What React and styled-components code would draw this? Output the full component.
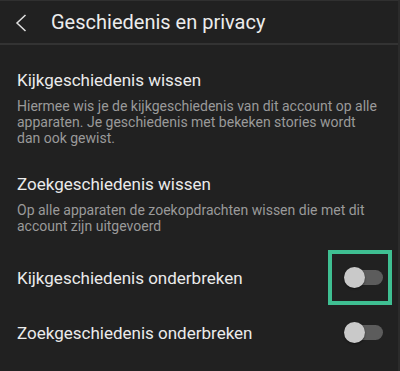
import React from "react";
import styled, { createGlobalStyle } from "styled-components";

const Global = createGlobalStyle`
  html, body { margin: 0; padding: 0; background: #212121; }
  body { font-family: Roboto, "Noto Sans", sans-serif; }
`;

const Screen = styled.div`
  width: 400px;
  height: 371px;
  box-sizing: border-box;
  background: #212121;
  border-top: 1px solid #303030;
  border-right: 2px solid #2b2b2b;
  overflow: hidden;
  display: flex;
  flex-direction: column;
`;

const Header = styled.header`
  height: 42px;
  flex: none;
  display: flex;
  align-items: center;
  border-bottom: 2px solid #333333;
  padding-left: 15px;
  gap: 24px;
`;

const BackIcon = styled.svg`
  width: 12px;
  height: 18px;
  flex: none;
  margin-top: 1px;
`;

const Title = styled.h1`
  margin: 0;
  font-size: 20px;
  font-weight: 400;
  color: #ececec;
  letter-spacing: 0;
`;

const Content = styled.div`
  display: flex;
  flex-direction: column;
  padding: 25px 0 0 17px;
`;

const Section = styled.section`
  display: flex;
  flex-direction: column;
  gap: 8px;
  margin-bottom: ${(p) => p.$mb}px;
`;

const ItemTitle = styled.div`
  font-size: 17px;
  line-height: 20px;
  color: #ebebeb;
`;

const ItemDesc = styled.div`
  font-size: 14px;
  line-height: 16px;
  color: #9a9a9a;
  padding-right: 20px;
`;

const Row = styled.div`
  height: 55px;
  display: flex;
  align-items: center;
  justify-content: space-between;
  padding-right: 6px;
`;

const Highlight = styled.div`
  width: 64px;
  height: 55px;
  display: flex;
  align-items: center;
  justify-content: flex-end;
  padding-right: 9px;
  box-sizing: border-box;
  ${(p) => (p.$on ? "outline: 4px solid #3fbf92; outline-offset: -4px;" : "")}
`;

const Track = styled.div`
  position: relative;
  width: 38px;
  height: 15px;
  border-radius: 8px;
  background: #5c5c5c;
`;

const Thumb = styled.div`
  position: absolute;
  left: -1px;
  top: -3px;
  width: 21px;
  height: 21px;
  border-radius: 50%;
  background: #c9c9c9;
  box-shadow: 0 1px 2px rgba(0, 0, 0, 0.5);
`;

function Toggle() {
  return (
    <Track>
      <Thumb />
    </Track>
  );
}

export default function App() {
  return (
    <>
      <Global />
      <Screen>
        <Header>
          <BackIcon viewBox="0 0 12 18">
            <path d="M10.5 1 L2 9 L10.5 17" fill="none" stroke="#e0e0e0" strokeWidth="1.5" />
          </BackIcon>
          <Title>Geschiedenis en privacy</Title>
        </Header>
        <Content>
          <Section $mb={28}>
            <ItemTitle>Kijkgeschiedenis wissen</ItemTitle>
            <ItemDesc>
              Hiermee wis je de kijkgeschiedenis van dit account op alle apparaten. Je geschiedenis met bekeken stories wordt dan ook gewist.
            </ItemDesc>
          </Section>
          <Section $mb={16}>
            <ItemTitle>Zoekgeschiedenis wissen</ItemTitle>
            <ItemDesc>
              Op alle apparaten de zoekopdrachten wissen die met dit account zijn uitgevoerd
            </ItemDesc>
          </Section>
          <Row>
            <ItemTitle>Kijkgeschiedenis onderbreken</ItemTitle>
            <Highlight $on>
              <Toggle />
            </Highlight>
          </Row>
          <Row>
            <ItemTitle>Zoekgeschiedenis onderbreken</ItemTitle>
            <Highlight>
              <Toggle />
            </Highlight>
          </Row>
        </Content>
      </Screen>
    </>
  );
}
